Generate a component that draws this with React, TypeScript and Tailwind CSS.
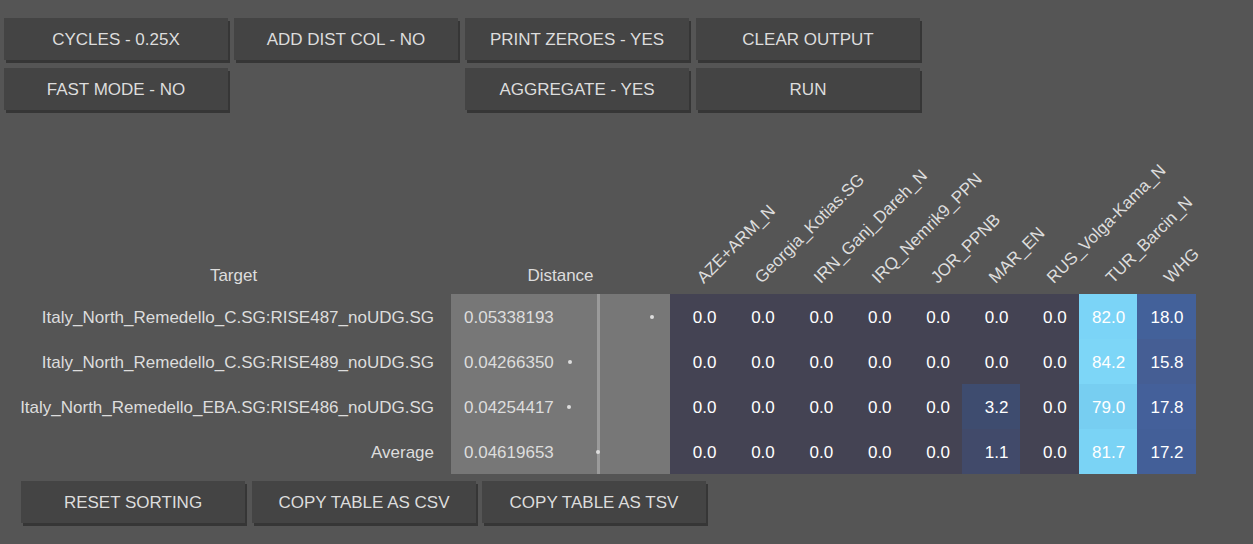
import React from "react";

const cols = [
  "AZE+ARM_N",
  "Georgia_Kotias.SG",
  "IRN_Ganj_Dareh_N",
  "IRQ_Nemrik9_PPN",
  "JOR_PPNB",
  "MAR_EN",
  "RUS_Volga-Kama_N",
  "TUR_Barcin_N",
  "WHG",
];

const DARK = "#444353";

type Row = {
  name: string;
  dist: string;
  dot: number;
  vals: { v: string; bg: string }[];
};

const z = (n = 5) => Array.from({ length: n }, () => ({ v: "0.0", bg: DARK }));

const rows: Row[] = [
  {
    name: "Italy_North_Remedello_C.SG:RISE487_noUDG.SG",
    dist: "0.05338193",
    dot: 199,
    vals: [...z(), { v: "0.0", bg: DARK }, { v: "0.0", bg: DARK }, { v: "82.0", bg: "#7bd4f7" }, { v: "18.0", bg: "#43619a" }],
  },
  {
    name: "Italy_North_Remedello_C.SG:RISE489_noUDG.SG",
    dist: "0.04266350",
    dot: 117,
    vals: [...z(), { v: "0.0", bg: DARK }, { v: "0.0", bg: DARK }, { v: "84.2", bg: "#7dd6f7" }, { v: "15.8", bg: "#455e94" }],
  },
  {
    name: "Italy_North_Remedello_EBA.SG:RISE486_noUDG.SG",
    dist: "0.04254417",
    dot: 116,
    vals: [...z(), { v: "3.2", bg: "#3e4c6f" }, { v: "0.0", bg: DARK }, { v: "79.0", bg: "#77cef1" }, { v: "17.8", bg: "#44609a" }],
  },
  {
    name: "Average",
    dist: "0.04619653",
    dot: 145,
    vals: [...z(), { v: "1.1", bg: "#414a6a" }, { v: "0.0", bg: DARK }, { v: "81.7", bg: "#7ad3f5" }, { v: "17.2", bg: "#435f98" }],
  },
];

function Btn({ children, className = "" }: { children: React.ReactNode; className?: string }) {
  return (
    <button
      className={`w-[224px] h-[42px] pt-[2px] bg-[#444444] text-[#dddddd] text-[17px] uppercase shadow-[2px_3px_0_#363636] ${className}`}
    >
      {children}
    </button>
  );
}

export default function App() {
  return (
    <div
      className="min-h-screen w-full bg-[#555555] text-[17px] text-[#dddddd] overflow-hidden"
      style={{ fontFamily: '"Liberation Sans", Arial, sans-serif' }}
    >
      <div className="grid grid-cols-[230px_231px_231px_224px] gap-y-[8px] pl-[4px] pt-[18px]">
        <Btn>Cycles - 0.25x</Btn>
        <Btn>Add dist col - no</Btn>
        <Btn>Print zeroes - yes</Btn>
        <Btn>Clear output</Btn>
        <Btn>Fast mode - no</Btn>
        <div />
        <Btn>Aggregate - yes</Btn>
        <Btn>Run</Btn>
      </div>

      <table className="ml-[16px] mt-[34px] table-fixed border-collapse">
        <colgroup>
          <col className="w-[435px]" />
          <col className="w-[219px]" />
          {cols.map((c) => (
            <col key={c} className="w-[58.4px]" />
          ))}
        </colgroup>
        <thead>
          <tr className="h-[150px]">
            <th className="align-bottom pb-[6px] font-normal text-center p-0">Target</th>
            <th className="align-bottom pb-[6px] font-normal text-center p-0">Distance</th>
            {cols.map((c) => (
              <th key={c} className="relative p-0 font-normal">
                <span className="absolute left-[39px] bottom-[5px] origin-bottom-left -rotate-45 whitespace-nowrap">
                  {c}
                </span>
              </th>
            ))}
          </tr>
        </thead>
        <tbody>
          {rows.map((r) => (
            <tr key={r.name} className="h-[45px]">
              <td className="p-0 pt-[2px] pr-[17px] text-right whitespace-nowrap">{r.name}</td>
              <td className="relative p-0 pt-[2px] pl-[13px] bg-[#777777] text-[#dddddd]">
                <span className="absolute left-[146px] top-0 bottom-0 w-[3px] bg-[#9a9a9a]" />
                <span
                  className="absolute top-1/2 -translate-y-1/2 w-[4px] h-[4px] rounded-full bg-[#dddddd]"
                  style={{ left: r.dot }}
                />
                <span className="relative">{r.dist}</span>
              </td>
              {r.vals.map((v, i) => (
                <td
                  key={i}
                  className="p-0 pt-[2px] pr-[12px] text-right text-white"
                  style={{ backgroundColor: v.bg }}
                >
                  {v.v}
                </td>
              ))}
            </tr>
          ))}
        </tbody>
      </table>

      <div className="flex ml-[21px] mt-[7px]">
        <Btn>Reset sorting</Btn>
        <Btn className="ml-[7px]">Copy table as CSV</Btn>
        <Btn className="ml-[6px]">Copy table as TSV</Btn>
      </div>
    </div>
  );
}
